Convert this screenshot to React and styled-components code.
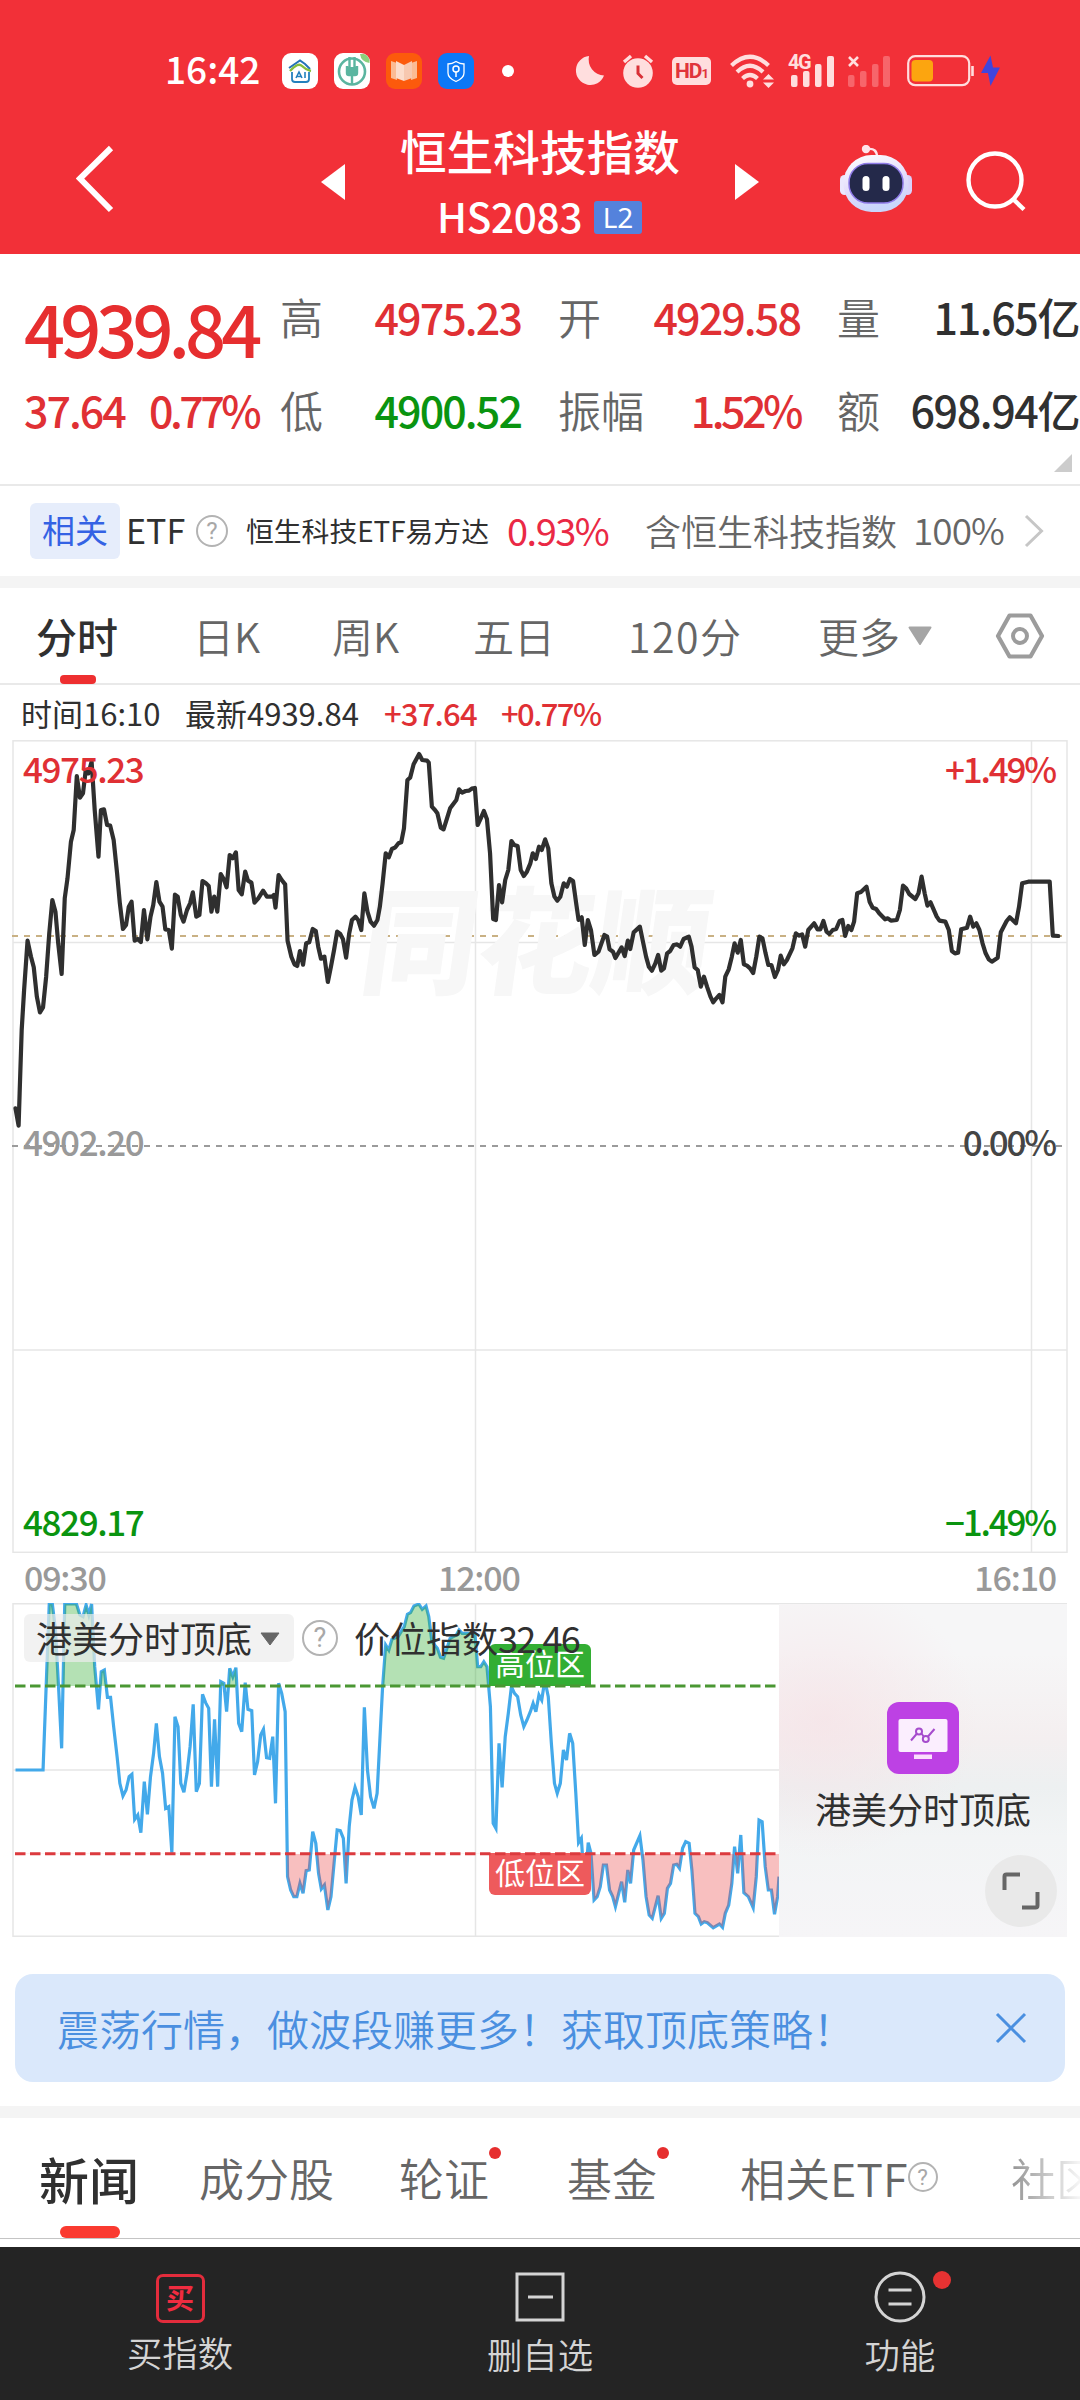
import React from 'react';
import styled, { createGlobalStyle, ThemeProvider } from 'styled-components';

const theme = {
  brand: '#f23038',
  up: '#e03034',
  down: '#0a9410',
  ink: '#303030',
  grey: '#666666',
  light: '#999999',
  line: '#e9e9e9',
  band: '#f4f4f4',
};

const PRICE =
  '45,1135 54,1187 57,1090 63,900 70,780 80,632 90,680 98,712 107,800 116,847 125,832 134,740 143,610 152,510 161,545 169,640 179,732 188,505 196,445 206,335 214,300 223,138 232,203 241,190 249,120 257,130 266,95 275,240 286,380 293,240 302,238 311,285 320,287 330,330 340,430 348,520 357,597 366,585 374,530 382,515 391,632 400,627 409,636 418,540 428,628 437,560 445,525 454,456 463,515 472,530 480,598 490,600 499,656 508,494 516,500 525,555 533,575 543,540 552,520 560,487 570,560 579,555 588,453 598,460 606,468 614,545 622,500 631,545 641,432 650,448 658,472 667,375 676,385 685,367 693,480 702,493 712,425 720,452 730,458 739,518 750,505 764,482 775,500 790,500 795,495 800,533 809,435 818,450 828,463 835,632 846,680 855,703 863,708 871,663 880,704 889,640 898,637 908,597 917,603 924,650 932,686 942,680 952,756 961,710 970,660 979,605 988,612 996,628 1005,683 1014,610 1022,570 1032,560 1040,570 1049,600 1058,490 1067,545 1076,575 1086,587 1096,570 1103,530 1111,460 1120,370 1129,382 1138,357 1148,352 1157,340 1165,337 1173,295 1183,150 1191,143 1201,103 1217,72 1226,90 1240,92 1245,98 1254,230 1263,240 1270,250 1280,293 1288,298 1298,265 1307,235 1325,210 1333,178 1342,188 1352,183 1362,182 1370,176 1379,174 1387,285 1396,265 1405,243 1414,268 1423,370 1432,567 1440,570 1449,465 1458,517 1467,450 1476,420 1485,333 1493,345 1503,348 1512,420 1521,438 1530,425 1540,400 1547,370 1556,387 1565,350 1573,360 1583,328 1592,355 1601,460 1610,500 1618,512 1627,500 1637,460 1646,470 1655,447 1664,453 1673,520 1680,570 1689,562 1698,645 1707,570 1716,600 1726,675 1738,665 1755,615 1763,620 1770,658 1780,665 1787,684 1805,652 1814,678 1823,632 1830,657 1840,607 1858,590 1868,640 1876,680 1884,710 1893,722 1903,700 1911,675 1920,722 1928,715 1937,670 1946,663 1956,645 1966,643 1975,650 1985,627 2000,620 2008,650 2017,712 2026,720 2035,770 2044,740 2053,770 2063,800 2071,817 2080,805 2089,795 2098,817 2106,740 2116,718 2125,680 2133,640 2142,668 2151,630 2160,703 2169,707 2178,715 2187,729 2196,680 2205,620 2214,625 2223,670 2231,705 2240,705 2250,741 2259,720 2267,677 2276,703 2285,690 2301,655 2311,610 2320,617 2329,613 2338,650 2347,600 2364,580 2374,598 2382,598 2391,573 2400,605 2408,612 2418,600 2428,597 2438,573 2446,570 2454,618 2463,588 2472,600 2480,575 2489,490 2500,486 2516,470 2525,515 2534,533 2544,537 2553,550 2570,568 2578,565 2587,572 2604,570 2613,540 2622,467 2631,475 2640,492 2658,507 2667,490 2676,440 2685,490 2693,527 2702,517 2720,560 2728,572 2745,575 2755,600 2764,663 2773,670 2782,668 2791,598 2808,593 2817,560 2826,590 2835,580 2844,600 2853,640 2862,670 2871,688 2880,695 2897,683 2906,607 2923,573 2932,562 2950,580 2959,530 2968,460 2986,455 3048,455 3057,617 3073,618';

const LEVEL =
  '45,810 125,810 134,560 143,312 152,312 161,390 170,560 179,745 188,312 222,312 232,345 241,350 250,315 258,345 266,312 275,500 286,628 294,515 303,510 312,592 321,592 330,680 340,770 348,850 357,888 366,870 375,830 383,823 391,958 400,945 409,998 419,845 428,943 437,830 446,760 454,670 463,770 472,820 481,925 490,920 499,1058 508,650 517,680 525,850 534,877 543,820 552,740 561,613 570,875 579,850 588,583 597,608 606,625 614,860 623,658 632,860 641,545 650,550 658,635 667,505 676,530 685,503 693,670 702,695 712,548 720,628 731,632 739,825 748,785 757,705 765,688 774,773 783,775 792,710 800,910 809,550 818,580 828,635 835,1130 844,1170 853,1190 862,1190 871,1150 880,1180 889,1112 898,1110 908,995 917,1030 925,1120 933,1167 942,1155 952,1230 961,1190 970,1090 979,990 988,992 997,1015 1005,1150 1014,980 1022,900 1031,862 1040,890 1049,945 1058,622 1067,810 1076,890 1086,925 1095,880 1103,720 1111,560 1120,435 1129,450 1138,418 1156,410 1174,380 1183,343 1192,338 1202,318 1216,312 1226,328 1237,318 1245,350 1254,425 1270,445 1279,472 1288,475 1298,445 1307,415 1325,405 1333,390 1342,400 1379,400 1387,500 1396,500 1405,485 1414,500 1424,620 1432,970 1440,985 1449,730 1458,862 1467,710 1476,640 1485,560 1494,580 1503,590 1512,645 1521,680 1530,660 1540,635 1548,610 1556,635 1565,585 1573,600 1582,540 1592,590 1601,730 1610,850 1618,880 1627,850 1636,750 1645,780 1654,700 1663,730 1672,880 1680,1028 1688,1015 1698,1170 1708,1028 1716,1060 1725,1200 1734,1190 1743,1160 1752,1095 1761,1095 1770,1170 1779,1190 1787,1220 1805,1145 1814,1207 1823,1110 1831,1150 1840,1050 1858,1007 1867,1080 1876,1190 1885,1245 1894,1255 1911,1187 1920,1255 1929,1240 1938,1165 1947,1150 1956,1095 1965,1093 1973,1105 1982,1045 1991,1025 2001,1030 2009,1110 2018,1240 2028,1250 2036,1272 2045,1265 2054,1268 2071,1283 2089,1272 2098,1282 2106,1240 2116,1215 2125,1150 2133,1040 2142,1120 2151,1005 2160,1178 2173,1190 2187,1223 2196,1130 2204,960 2213,965 2222,1100 2231,1170 2240,1170 2249,1243 2258,1190 2262,1130';

const HIGH = 558;
const LOW = 1061;

const quotes = [
  { label: '高', value: '4975.23', tone: 'up' },
  { label: '开', value: '4929.58', tone: 'up' },
  { label: '量', value: '11.65亿', tone: 'ink' },
  { label: '低', value: '4900.52', tone: 'down' },
  { label: '振幅', value: '1.52%', tone: 'up', tight: true },
  { label: '额', value: '698.94亿', tone: 'ink' },
];

const periods = ['分时', '日K', '周K', '五日', '120分'];

const Help = ({ size }) => (
  <HelpMark $size={size}>?</HelpMark>
);

const StatusBar = () => (
  <StyledStatus>
    <Clock>16:42</Clock>
    <svg width="36" height="36" viewBox="0 0 36 36">
      <rect width="36" height="36" rx="9" fill="#fff" />
      <path d="M7 15 L18 7.5 L23 11 L28 16" fill="none" stroke="#2472b8" strokeWidth="2" />
      <path d="M8 18 Q16 9 20 13 T29 18" fill="none" stroke="#85bd3c" strokeWidth="2.4" />
      <path d="M10 19v7q0 3 3 3h11q3 0 3-3v-7" fill="none" stroke="#2380bd" strokeWidth="1.8" />
      <path d="M14 25l3-6 3 6M15 23.5h4M23 19v6" fill="none" stroke="#2380bd" strokeWidth="1.6" />
    </svg>
    <svg width="36" height="36" viewBox="0 0 36 36">
      <rect width="36" height="36" rx="9" fill="#fff" />
      <path d="M26 1h4q6 2 5.500 9Q27 9 26 1z" fill="#8cd07c" />
      <circle cx="18" cy="18.500" r="13" fill="none" stroke="#5bb5a0" strokeWidth="2.600" />
      <path d="M15.500 4v10M20.500 4v10M18 14v18M13 13v7q0 2 2 2h6q2 0 2-2v-7" fill="none" stroke="#5bb5a0" strokeWidth="2.400" />
      <path d="M13 14h10v8H13z" fill="#5bb5a0" />
    </svg>
    <svg width="36" height="36" viewBox="0 0 36 36">
      <rect width="36" height="36" rx="9" fill="#fc5a0c" />
      <path d="M5 8l6 2v17l-6-2zM31 8l-6 2v17l6-2z" fill="#fbbb94" />
      <path d="M10 8l8 4v16l-8-3z" fill="#fcdccb" />
      <path d="M26 8l-8 4v16l8-3z" fill="#f7c8b0" />
    </svg>
    <svg width="36" height="36" viewBox="0 0 36 36">
      <rect width="36" height="36" rx="9" fill="#0c78f6" />
      <path d="M18 8.500q4 2.500 8 2.500v9q0 5-8 8.500-8-3.500-8-8.500v-9q4 0 8-2.500z" fill="none" stroke="#fff" strokeWidth="1.300" />
      <circle cx="18" cy="16" r="3" fill="none" stroke="#fff" strokeWidth="1.500" />
      <path d="M18 19v5" stroke="#fff" strokeWidth="1.500" />
    </svg>
    <Dot />
    <StatusIcons>
      <svg width="30" height="34" viewBox="0 0 30 34">
        <path d="M14 2A16 16 0 0 0 29 21.500A14.500 14.500 0 1 1 14 2z" fill="#ffdede" />
      </svg>
      <svg width="32" height="34" viewBox="0 0 32 34">
        <circle cx="16" cy="19" r="14.800" fill="#ffdede" />
        <path d="M2 8l7-6M30 8l-7-6" stroke="#ffdede" strokeWidth="3.400" />
        <path d="M16 11.500v8l4.500 4.500" stroke="#d93037" strokeWidth="3" fill="none" />
      </svg>
      <HdBadge>
        HD<small>1</small>
      </HdBadge>
      <svg width="44" height="34" viewBox="0 0 44 34">
        <g fill="none" stroke="#ffdede" strokeWidth="4.200">
          <path d="M1.500 11.500Q20 -6 38.500 11.500" />
          <path d="M7 18Q20 5.500 33 18" />
          <path d="M12.500 24.500Q20 17.500 27.500 24.500" />
        </g>
        <circle cx="20" cy="30" r="3.400" fill="#ffdede" />
        <path d="M33 25.500l5.500-5.500 5.500 5.500zM33 28.500l5.500 5.500 5.500-5.500z" fill="#ffdede" />
      </svg>
      <Signal>
        <span>4G</span>
        <svg width="46" height="34" viewBox="0 0 46 34" fill="#ffdede">
          <rect x="3" y="21" width="6.500" height="12" rx="2" />
          <rect x="15" y="17" width="6.500" height="16" rx="2" />
          <rect x="27" y="10" width="6.500" height="23" rx="2" />
          <rect x="39" y="2" width="7" height="31" rx="2" />
        </svg>
      </Signal>
      <svg width="42" height="34" viewBox="0 0 42 34">
        <path d="M1 3l9 9M10 3l-9 9" stroke="#ffdede" strokeWidth="2.600" />
        <g fill="#f7656b">
          <rect x="0" y="21" width="6.500" height="12" rx="2" />
          <rect x="12" y="17" width="6.500" height="16" rx="2" />
          <rect x="24" y="10" width="6.500" height="23" rx="2" />
          <rect x="35" y="2" width="7" height="31" rx="2" />
        </g>
      </svg>
      <svg width="95" height="34" viewBox="0 0 95 34">
        <rect x="1.200" y="2.200" width="61" height="29" rx="7" fill="none" stroke="#ffdede" strokeWidth="2.200" />
        <rect x="4.500" y="6" width="21.500" height="21.500" rx="4" fill="#fca50f" />
        <path d="M65.500 12v10" stroke="#ffdede" strokeWidth="2.600" />
        <path d="M83.500 1.500L74 19h7l2.500 13L93 13.500h-7z" fill="#4145dc" />
      </svg>
    </StatusIcons>
  </StyledStatus>
);

const TitleBar = () => (
  <StyledTitle>
    <svg width="38" height="70" viewBox="0 0 38 70">
      <path d="M35 4L4 34.500 35 66" fill="none" stroke="#fff" strokeWidth="6" />
    </svg>
    <svg width="24" height="36" viewBox="0 0 24 36">
      <path d="M0 18L24 0v36z" fill="#fff" />
    </svg>
    <Heading>
      <h1>恒生科技指数</h1>
      <div>
        <span>HS2083</span>
        <em>L2</em>
      </div>
    </Heading>
    <svg width="24" height="36" viewBox="0 0 24 36">
      <path d="M24 18L0 0v36z" fill="#fff" />
    </svg>
    <svg width="72" height="68" viewBox="0 0 72 68">
      <defs>
        <linearGradient id="shell" x1="0" y1="0" x2="0.300" y2="1">
          <stop offset="0" stopColor="#ffffff" />
          <stop offset="0.600" stopColor="#e3dcfb" />
          <stop offset="1" stopColor="#c9d6fb" />
        </linearGradient>
      </defs>
      <circle cx="26" cy="4" r="4.200" fill="#ffe3ea" />
      <path d="M28 4q9-1 9 8" fill="none" stroke="#ffe3ea" strokeWidth="2.400" />
      <rect x="0" y="30" width="9" height="20" rx="4.500" fill="#eae7fd" />
      <rect x="63" y="30" width="9" height="20" rx="4.500" fill="#d9d2fb" />
      <rect x="3.500" y="10" width="65" height="57" rx="28" fill="url(#shell)" />
      <rect x="9" y="18.500" width="54" height="39.500" rx="19" fill="#24294a" stroke="#8f7be8" strokeWidth="1.500" />
      <rect x="22.500" y="31" width="7" height="15" rx="3.500" fill="#fff" />
      <rect x="42.500" y="31" width="7" height="15" rx="3.500" fill="#fff" />
    </svg>
    <svg width="62" height="62" viewBox="0 0 62 62">
      <circle cx="29" cy="30" r="26.500" fill="none" stroke="#fff" strokeWidth="4.400" />
      <path d="M47.500 49.500l10.500 10" stroke="#fff" strokeWidth="4.400" />
    </svg>
  </StyledTitle>
);

const QuotePanel = () => (
  <StyledQuote>
    <Latest>
      <strong>4939.84</strong>
      <div>
        <span>37.64</span>
        <span>0.77%</span>
      </div>
    </Latest>
    <QuoteGrid>
      {quotes.map(({ label, value, tone, tight }) => (
        <QuoteCell key={label} $tone={tone} $tight={tight}>
          <span>{label}</span>
          <b>{value}</b>
        </QuoteCell>
      ))}
    </QuoteGrid>
    <Corner />
  </StyledQuote>
);

const EtfRow = () => (
  <StyledEtf>
    <mark>相关</mark>
    <span className="name">ETF</span>
    <Help size={32} />
    <span className="fund">恒生科技ETF易方达</span>
    <span className="rise">0.93%</span>
    <span className="holds">含恒生科技指数</span>
    <span className="share">100%</span>
    <svg width="20" height="34" viewBox="0 0 20 34">
      <path d="M2 2l15.500 15L2 32" fill="none" stroke="#c6c6c6" strokeWidth="3" />
    </svg>
  </StyledEtf>
);

const PeriodTabs = () => (
  <StyledPeriods>
    {periods.map((name, i) => (
      <Period key={name} $active={i === 0} $spread={name.length > 2}>
        {name}
      </Period>
    ))}
    <Period>
      更多
      <svg width="24" height="20" viewBox="0 0 24 20">
        <path d="M1.500 1.500h21L12 18z" fill="#a5a5a5" stroke="#a5a5a5" strokeWidth="2" strokeLinejoin="round" />
      </svg>
    </Period>
    <svg width="50" height="48" viewBox="0 0 50 48">
      <path d="M14.500 3.500h21L47 24 35.500 44.500h-21L3 24z" fill="none" stroke="#9c9c9c" strokeWidth="4.200" strokeLinejoin="round" />
      <circle cx="25" cy="24" r="7" fill="none" stroke="#9c9c9c" strokeWidth="4" />
    </svg>
  </StyledPeriods>
);

const PriceChart = () => (
  <>
    <Readout>
      <span>时间16:10</span>
      <span>最新4939.84</span>
      <span className="up">+37.64</span>
      <span className="up">+0.77%</span>
    </Readout>
    <PlotArea $height={813}>
      <Watermark>同花顺</Watermark>
      <svg width="1080" height="813" viewBox="0 0 1080 813">
        <g stroke="#e6e6e6" strokeWidth="1.500" fill="none">
          <rect x="13" y="0.800" width="1054" height="811.500" />
          <path d="M13 202.500H1067M13 610H1067M475.500 0V813M1031.500 0V813" />
        </g>
        <path d="M12 196H1062" stroke="#c9b184" strokeWidth="2" strokeDasharray="6 6" />
        <path d="M12 406H1062" stroke="#9b9b9b" strokeWidth="2" strokeDasharray="6 6" />
      </svg>
      <LineLayer viewBox="0 30 3136 2439" preserveAspectRatio="none" height="813">
        <polyline points={PRICE} fill="none" stroke="#2f2f2f" strokeWidth="4.200" strokeLinejoin="round" strokeLinecap="round" vectorEffect="non-scaling-stroke" />
      </LineLayer>
      <AxisLabels>
        <AxisRow $left="#e03034" $right="#e03034">
          <span>4975.23</span>
          <span>+1.49%</span>
        </AxisRow>
        <AxisRow $left="#999999" $right="#454545">
          <span>4902.20</span>
          <span>0.00%</span>
        </AxisRow>
        <AxisRow $left="#0a9410" $right="#0a9410">
          <span>4829.17</span>
          <span>−1.49%</span>
        </AxisRow>
      </AxisLabels>
    </PlotArea>
    <TimeAxis>
      <span>09:30</span>
      <span>12:00</span>
      <span>16:10</span>
    </TimeAxis>
  </>
);

const LevelChart = () => (
  <PlotArea $height={334}>
    <svg width="1080" height="334" viewBox="0 0 1080 334">
      <path d="M13 .8H1067M13 333.200H779M13 167H779M13 0V334M475.500 0V334" stroke="#e6e6e6" strokeWidth="1.500" />
    </svg>
    <LineLayer viewBox="0 309 3136 1002" preserveAspectRatio="none" height="334">
      <defs>
        <clipPath id="above">
          <rect x="0" y="300" width="2262" height={HIGH - 300} />
        </clipPath>
        <clipPath id="below">
          <rect x="0" y={LOW} width="2262" height="240" />
        </clipPath>
      </defs>
      <polyline points={LEVEL} fill="none" stroke="#43a9ea" strokeWidth="3.200" vectorEffect="non-scaling-stroke" />
      <polygon points={`45,${HIGH} ${LEVEL} 2262,${HIGH}`} clipPath="url(#above)" fill="#33ae33" fillOpacity="0.370" />
      <polygon points={`45,${LOW} ${LEVEL} 2262,${LOW}`} clipPath="url(#below)" fill="#ea4444" fillOpacity="0.340" />
    </LineLayer>
    <Zone $top={41} $color="#33ae33" $high>
      高位区
    </Zone>
    <Zone $top={250} $color="#ee5a5c">
      低位区
    </Zone>
    <LineLayer viewBox="0 0 1080 334" height="334">
      <path d="M15 83H778" stroke="#4a9733" strokeWidth="3" strokeDasharray="10.500 4.500" />
      <path d="M15 250.700H778" stroke="#dc3a3e" strokeWidth="3" strokeDasharray="10.500 4.500" />
    </LineLayer>
    <Legend>
      <button type="button">
        港美分时顶底
        <svg width="20" height="14" viewBox="0 0 20 14">
          <path d="M1 1h18L10 13z" fill="#666" stroke="#666" strokeLinejoin="round" />
        </svg>
      </button>
      <Help size={36} />
      <span>
        价位指数<b>32.46</b>
      </span>
    </Legend>
    <Promo>
      <svg width="72" height="72" viewBox="0 0 72 72">
        <rect width="72" height="72" rx="12" fill="#bd41e4" />
        <rect x="11.500" y="17" width="49" height="33" rx="2" fill="#fbeefe" />
        <rect x="27" y="52.500" width="18" height="4.500" fill="#fbdffd" />
        <path d="M24 38.500l6-7M34.500 31.500l2.500 3.500M41 34.500l6.500-7.500" stroke="#a64ccd" strokeWidth="2" />
        <circle cx="32" cy="29.500" r="3" fill="none" stroke="#a64ccd" strokeWidth="2" />
        <circle cx="38.800" cy="37" r="3" fill="none" stroke="#a64ccd" strokeWidth="2" />
      </svg>
      <p>港美分时顶底</p>
      <Expand>
        <svg width="38" height="38" viewBox="0 0 38 38" fill="none" stroke="#666" strokeWidth="4">
          <path d="M2.500 18V4.500q0-2 2-2H18M35.500 20v13.500q0 2-2 2H20" />
        </svg>
      </Expand>
    </Promo>
  </PlotArea>
);

const NewsTabs = () => (
  <StyledNews>
    <NewsTab $active>新闻</NewsTab>
    <NewsTab>成分股</NewsTab>
    <NewsTab $dot>轮证</NewsTab>
    <NewsTab $dot>基金</NewsTab>
    <NewsTab>
      相关ETF
      <Help size={30} />
    </NewsTab>
    <NewsTab $fade>社区</NewsTab>
  </StyledNews>
);

const BottomNav = () => (
  <StyledNav>
    <NavItem $gap={11}>
      <BuyIcon>买</BuyIcon>
      买指数
    </NavItem>
    <NavItem $gap={13}>
      <svg width="52" height="52" viewBox="0 0 52 52" fill="none" stroke="#d4d4d4" strokeWidth="3">
        <path d="M3 3h46v46H3zM14 26h25" />
      </svg>
      删自选
    </NavItem>
    <NavItem $gap={13} $dot>
      <svg width="52" height="52" viewBox="0 0 52 52" fill="none" stroke="#d4d4d4" strokeWidth="3">
        <circle cx="26" cy="26" r="24" />
        <path d="M14.500 19h23M14.500 33h23" />
      </svg>
      功能
    </NavItem>
  </StyledNav>
);

const App = () => (
  <ThemeProvider theme={theme}>
    <GlobalStyle />
    <Page>
      <Header>
        <StatusBar />
        <TitleBar />
      </Header>
      <QuotePanel />
      <EtfRow />
      <Band />
      <PeriodTabs />
      <PriceChart />
      <LevelChart />
      <Banner>
        <span>震荡行情，做波段赚更多！获取顶底策略！</span>
        <svg width="34" height="34" viewBox="0 0 34 34">
          <path d="M3 3l28 28M31 3L3 31" stroke="#4a8fe0" strokeWidth="3" />
        </svg>
      </Banner>
      <Band />
      <NewsTabs />
      <BottomNav />
    </Page>
  </ThemeProvider>
);

const GlobalStyle = createGlobalStyle`
  * {
    box-sizing: border-box;
  }
  body {
    margin: 0;
    background: #fff;
    font-family: 'Noto Sans CJK SC', 'Noto Sans', sans-serif;
    line-height: 1;
  }
  svg {
    display: block;
    flex: none;
  }
  h1, p {
    margin: 0;
    font-weight: 400;
  }
`;

const Page = styled.div`
  width: 1080px;
  height: 2400px;
  overflow: hidden;
  display: flex;
  flex-direction: column;
  background: #fff;
  color: ${(props) => props.theme.ink};
  white-space: nowrap;
  > * {
    flex: none;
  }
`;

const Header = styled.header`
  height: 254px;
  background: ${(props) => props.theme.brand};
  color: #fff;
`;

const StyledStatus = styled.div`
  height: 124px;
  padding: 18px 0 0 165px;
  display: flex;
  align-items: center;
  gap: 16px;
`;

const Clock = styled.span`
  width: 101px;
  font-size: 37px;
  font-weight: 500;
  padding-bottom: 5px;
`;

const Dot = styled.i`
  width: 12px;
  height: 12px;
  margin-left: 12px;
  border-radius: 50%;
  background: #fff;
`;

const StatusIcons = styled.div`
  display: flex;
  align-items: center;
  gap: 17px;
  margin-left: 45px;
`;

const HdBadge = styled.span`
  width: 39px;
  height: 28px;
  margin: 0 2px 0 1px;
  border-radius: 5px;
  background: #ffdede;
  color: #e0343b;
  font: 700 21px/29px 'Liberation Sans Narrow', Roboto, sans-serif;
  letter-spacing: -1px;
  text-align: center;
  small {
    font-size: 13px;
  }
`;

const Signal = styled.span`
  position: relative;
  margin: 0 -3px;
  span {
    position: absolute;
    left: 0;
    top: -1px;
    font: 700 20px/18px 'Liberation Sans Narrow', Roboto, sans-serif;
    letter-spacing: -1.500px;
    color: #ffdede;
  }
`;

const StyledTitle = styled.div`
  height: 130px;
  padding-left: 76px;
  display: flex;
  align-items: center;
  > svg:first-child {
    margin-right: 207px;
    margin-bottom: 20px;
  }
  > svg:nth-child(2),
  > svg:nth-child(4) {
    margin-bottom: 14px;
  }
  > svg:nth-child(5) {
    margin: 0 54px 20px 81px;
  }
  > svg:nth-child(6) {
    margin-bottom: 16px;
  }
`;

const Heading = styled.div`
  width: 390px;
  height: 130px;
  h1 {
    padding-top: 3px;
    font-size: 46.7px;
    font-weight: 500;
    text-align: center;
  }
  div {
    display: flex;
    align-items: center;
    margin: 22px 0 0 92px;
  }
  span {
    width: 157px;
    font-size: 40.500px;
    font-weight: 500;
    letter-spacing: -0.300px;
  }
  em {
    width: 48px;
    height: 33px;
    margin-top: 4px;
    border-radius: 3px;
    background: #5482dc;
    font: 400 28px/33px 'Noto Sans', sans-serif;
    text-align: center;
  }
`;

const StyledQuote = styled.section`
  position: relative;
  height: 232px;
  display: flex;
  border-bottom: 2px solid ${(props) => props.theme.line};
`;

const Latest = styled.div`
  width: 280px;
  padding: 37px 0 0 24px;
  color: ${(props) => props.theme.up};
  strong {
    display: block;
    font-size: 72px;
    font-weight: 500;
    letter-spacing: -4.900px;
    color: #e62e2f;
  }
  div {
    display: flex;
    margin-top: 25px;
    font-size: 43px;
    font-weight: 500;
    letter-spacing: -2px;
  }
  span:first-child {
    width: 125px;
  }
  span:last-child {
    letter-spacing: -3.500px;
  }
`;

const QuoteGrid = styled.div`
  display: grid;
  grid-template-columns: 241px 242px 242px;
  grid-template-rows: 43px 43px;
  column-gap: 37px;
  row-gap: 50px;
  padding-top: 41px;
`;

const QuoteCell = styled.div`
  display: flex;
  justify-content: space-between;
  font-size: 43px;
  span {
    color: ${(props) => props.theme.grey};
    font-weight: 350;
  }
  b {
    font-weight: 500;
    letter-spacing: ${(props) => (props.$tight ? -3.5 : props.$tone === 'ink' ? -1.4 : -1.9)}px;
    color: ${(props) => props.theme[props.$tone]};
  }
`;

const Corner = styled.i`
  position: absolute;
  right: 8px;
  bottom: 12px;
  border: 9px solid #ccc;
  border-left-color: transparent;
  border-top-color: transparent;
`;

const HelpMark = styled.i`
  display: inline-block;
  width: ${(props) => props.$size}px;
  height: ${(props) => props.$size}px;
  border: 2px solid #b3b3b3;
  border-radius: 50%;
  color: #a8a8a8;
  font: 400 ${(props) => props.$size * 0.75}px / ${(props) => props.$size - 4}px Roboto, sans-serif;
  text-align: center;
`;

const StyledEtf = styled.section`
  height: 90px;
  padding-left: 30px;
  display: grid;
  grid-template-columns: 96px 70px 50px 261px 138px 268px 111px auto;
  align-items: center;
  mark {
    width: 90px;
    height: 56px;
    border-radius: 6px;
    background: #e6edfb;
    color: #3462e4;
    font-size: 33px;
    line-height: 53px;
    text-align: center;
  }
  .name,
  .rise,
  .holds,
  .share {
    padding-bottom: 3px;
  }
  .name {
    font-size: 34px;
  }
  .fund {
    font-size: 27.800px;
  }
  .rise {
    font-size: 38px;
    color: #ea2945;
    letter-spacing: -1.500px;
  }
  .holds {
    font-size: 36px;
    font-weight: 350;
    color: ${(props) => props.theme.grey};
  }
  .share {
    font-size: 37px;
    font-weight: 350;
    letter-spacing: -1px;
    color: ${(props) => props.theme.grey};
  }
`;

const Band = styled.div`
  height: 12px;
  background: ${(props) => props.theme.band};
`;

const StyledPeriods = styled.nav`
  height: 97px;
  padding-left: 36px;
  display: grid;
  grid-template-columns: 157px 139px 141px 155px 190px 177px auto;
  align-items: center;
  border-bottom: 2px solid ${(props) => props.theme.line};
`;

const Period = styled.div`
  position: relative;
  display: flex;
  align-items: center;
  gap: 8px;
  font-size: 41px;
  font-weight: ${(props) => (props.$active ? 500 : 350)};
  letter-spacing: ${(props) => (props.$spread ? 1.5 : 0)}px;
  color: ${(props) => (props.$active ? props.theme.ink : props.theme.grey)};
  &::after {
    content: '';
    display: ${(props) => (props.$active ? 'block' : 'none')};
    position: absolute;
    left: 24px;
    bottom: -28px;
    width: 36px;
    height: 9px;
    border-radius: 4px;
    background: #ee2f30;
  }
`;

const Readout = styled.div`
  height: 55px;
  padding: 12px 0 0 21px;
  display: grid;
  grid-template-columns: 164px 199px 117px auto;
  font-size: 31px;
  .up {
    font-weight: 500;
    letter-spacing: -0.800px;
    color: ${(props) => props.theme.up};
  }
  .up:last-child {
    letter-spacing: -1.600px;
  }
`;

const PlotArea = styled.section`
  position: relative;
  height: ${(props) => props.$height}px;
`;

const LineLayer = styled.svg`
  position: absolute;
  left: 0;
  top: 0;
  width: 1080px;
`;

const Watermark = styled.div`
  position: absolute;
  left: 364px;
  top: 136px;
  font-size: 116px;
  font-weight: 900;
  color: #f7f7f7;
  transform: skewX(-8deg);
`;

const AxisLabels = styled.div`
  position: absolute;
  inset: 10px 25px 15px 23px;
  display: flex;
  flex-direction: column;
  justify-content: space-between;
`;

const AxisRow = styled.div`
  display: flex;
  justify-content: space-between;
  font-size: 35px;
  font-weight: 500;
  letter-spacing: -1.400px;
  color: ${(props) => props.$left};
  &:nth-child(2) {
    margin-bottom: 8px;
  }
  span:last-child {
    letter-spacing: -2.200px;
    color: ${(props) => props.$right};
  }
`;

const TimeAxis = styled.div`
  height: 50px;
  padding: 7px 24px 0;
  display: grid;
  grid-template-columns: 414px 1fr auto;
  font-size: 34px;
  font-weight: 500;
  letter-spacing: -1.200px;
  color: ${(props) => props.theme.light};
`;

const Zone = styled.div`
  position: absolute;
  left: 489px;
  top: ${(props) => props.$top}px;
  width: 102px;
  height: 42px;
  border-radius: ${(props) => (props.$high ? '6px 6px 0 0' : '0 0 6px 6px')};
  background: ${(props) => props.$color};
  color: #fff;
  font-size: 30px;
  line-height: 37px;
  text-align: center;
`;

const Legend = styled.div`
  position: absolute;
  left: 24px;
  top: 11px;
  display: flex;
  align-items: center;
  font-size: 36px;
  button {
    width: 270px;
    height: 48px;
    margin-right: 8px;
    padding: 0 0 3px 12px;
    border: 0;
    border-radius: 6px;
    background: rgba(236, 236, 236, 0.7);
    color: inherit;
    font: inherit;
    display: flex;
    align-items: center;
    gap: 8px;
  }
  svg {
    margin-top: 4px;
  }
  span {
    margin-left: 16px;
    padding-bottom: 3px;
  }
  b {
    font-weight: 400;
    letter-spacing: -1.800px;
  }
`;

const Promo = styled.aside`
  position: absolute;
  left: 779px;
  top: 1px;
  width: 288px;
  height: 333px;
  padding-top: 98px;
  display: flex;
  flex-direction: column;
  align-items: center;
  background:
    radial-gradient(ellipse at 15% 35%, rgba(246, 226, 230, 0.7), transparent 45%),
    linear-gradient(#f6f6f7 15%, #f4eff0 40%, #edf0f1 55%, #f2f4f5 70%, #f6f5f7);
  p {
    margin-top: 16px;
    font-size: 36px;
  }
`;

const Expand = styled.div`
  position: absolute;
  right: 10px;
  bottom: 10px;
  width: 72px;
  height: 72px;
  border-radius: 50%;
  background: #e9e9e9;
  display: flex;
  align-items: center;
  justify-content: center;
`;

const Banner = styled.div`
  height: 108px;
  margin: 37px 15px 24px;
  padding: 0 37px 0 42px;
  display: flex;
  align-items: center;
  justify-content: space-between;
  border-radius: 18px;
  background: #dae8fb;
  color: #4a8fe0;
  font-size: 42px;
  font-weight: 350;
`;

const StyledNews = styled.nav`
  height: 129px;
  padding: 0 0 10px 39px;
  display: grid;
  grid-template-columns: 160px 200px 168px 173px 271px auto;
  align-items: center;
  background: linear-gradient(#c4c4c4, #c4c4c4) 0 120px / 100% 1px no-repeat;
`;

const NewsTab = styled.div`
  position: relative;
  display: flex;
  align-items: center;
  font-size: ${(props) => (props.$active ? 50 : 45)}px;
  font-weight: ${(props) => (props.$active ? 500 : 350)};
  color: ${(props) => (props.$active ? props.theme.ink : props.theme.grey)};
  -webkit-mask-image: ${(props) => (props.$fade ? 'linear-gradient(90deg, rgba(0, 0, 0, 0.7), transparent 75px)' : 'none')};
  i {
    margin-bottom: 1px;
  }
  &::after {
    content: '';
    position: absolute;
    display: ${(props) => (props.$active || props.$dot ? 'block' : 'none')};
    left: ${(props) => (props.$active ? 21 : 90)}px;
    top: ${(props) => (props.$active ? 73 : -8)}px;
    width: ${(props) => (props.$active ? 60 : 12)}px;
    height: 12px;
    border-radius: 6px;
    background: ${(props) => (props.$active ? '#fa3a30' : '#e62e2e')};
  }
`;

const StyledNav = styled.footer`
  flex: 1;
  display: grid;
  grid-template-columns: repeat(3, 1fr);
  background: #242424;
`;

const NavItem = styled.div`
  position: relative;
  display: flex;
  flex-direction: column;
  align-items: center;
  gap: ${(props) => props.$gap}px;
  padding-top: 24px;
  font-size: 35.400px;
  font-weight: 350;
  color: #d4d4d4;
  &::after {
    content: '';
    display: ${(props) => (props.$dot ? 'block' : 'none')};
    position: absolute;
    left: 213px;
    top: 24px;
    width: 18px;
    height: 18px;
    border-radius: 50%;
    background: #e63232;
  }
`;

const BuyIcon = styled.span`
  width: 49px;
  height: 49px;
  margin: 3px 2px 0;
  border: 3px solid #e32c3c;
  border-radius: 7px;
  color: #f02c40;
  font-size: 28px;
  font-weight: 700;
  line-height: 40px;
  text-align: center;
`;

export default App;
